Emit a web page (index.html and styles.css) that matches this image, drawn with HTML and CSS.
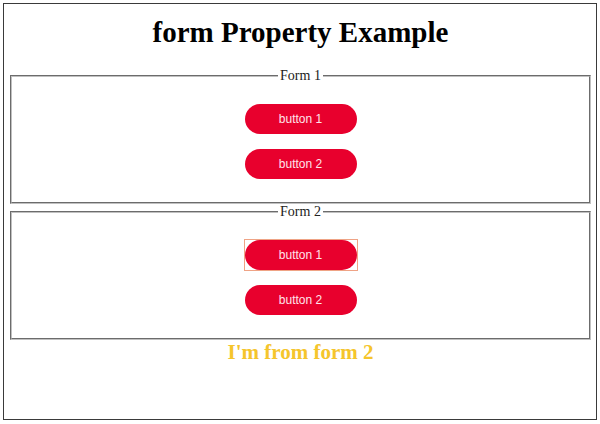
FILE: index.html
```html
<!DOCTYPE html>
<html>
<head>
<meta charset="utf-8">
<link rel="stylesheet" href="styles.css">
</head>
<body>
<div class="page">
  <h1 class="title">form Property Example</h1>
  <fieldset class="group">
    <legend class="legend">Form 1</legend>
    <div class="buttons">
      <button class="btn">button 1</button>
      <button class="btn">button 2</button>
    </div>
  </fieldset>
  <fieldset class="group">
    <legend class="legend">Form 2</legend>
    <div class="buttons">
      <button class="btn btn-focus">button 1</button>
      <button class="btn">button 2</button>
    </div>
  </fieldset>
  <p class="message">I'm from form 2</p>
</div>
</body>
</html>
```
FILE: styles.css
```css
html, body {
  margin: 0;
  padding: 0;
  background: #fff;
}
body {
  font-family: "Liberation Serif", "Times New Roman", serif;
}
.page {
  margin: 3px;
  height: 417px;
  border: 1.5px solid #3a3a3a;
  box-sizing: border-box;
  padding: 0 5px 0 6px;
}
.title {
  margin: 0;
  padding-top: 12px;
  height: 64px;
  box-sizing: border-box;
  text-align: center;
  font-size: 29px;
  line-height: 32px;
  font-weight: bold;
  color: #000;
}
.group {
  margin: 0;
  padding: 20px 0 23px;
  border: 2px groove #c0c0c0;
  min-width: 0;
}
.legend {
  margin: 0 auto;
  padding: 0 2px;
  font-size: 14px;
  line-height: 16px;
  color: #222;
}
.buttons {
  display: flex;
  flex-direction: column;
  align-items: center;
  gap: 15px;
}
.btn {
  width: 112px;
  height: 30px;
  border: none;
  border-radius: 15px;
  background: #e8002d;
  color: #ffe4ea;
  font-family: "Liberation Sans", Arial, sans-serif;
  font-size: 12px;
  padding: 0;
}
.btn-focus {
  position: relative;
}
.btn-focus::after {
  content: "";
  position: absolute;
  inset: -1px;
  border: 1px solid #efa385;
}
.message {
  margin: 0;
  padding-top: 0;
  text-align: center;
  font-size: 21px;
  line-height: 24px;
  font-weight: bold;
  color: #f5c52c;
}
```
